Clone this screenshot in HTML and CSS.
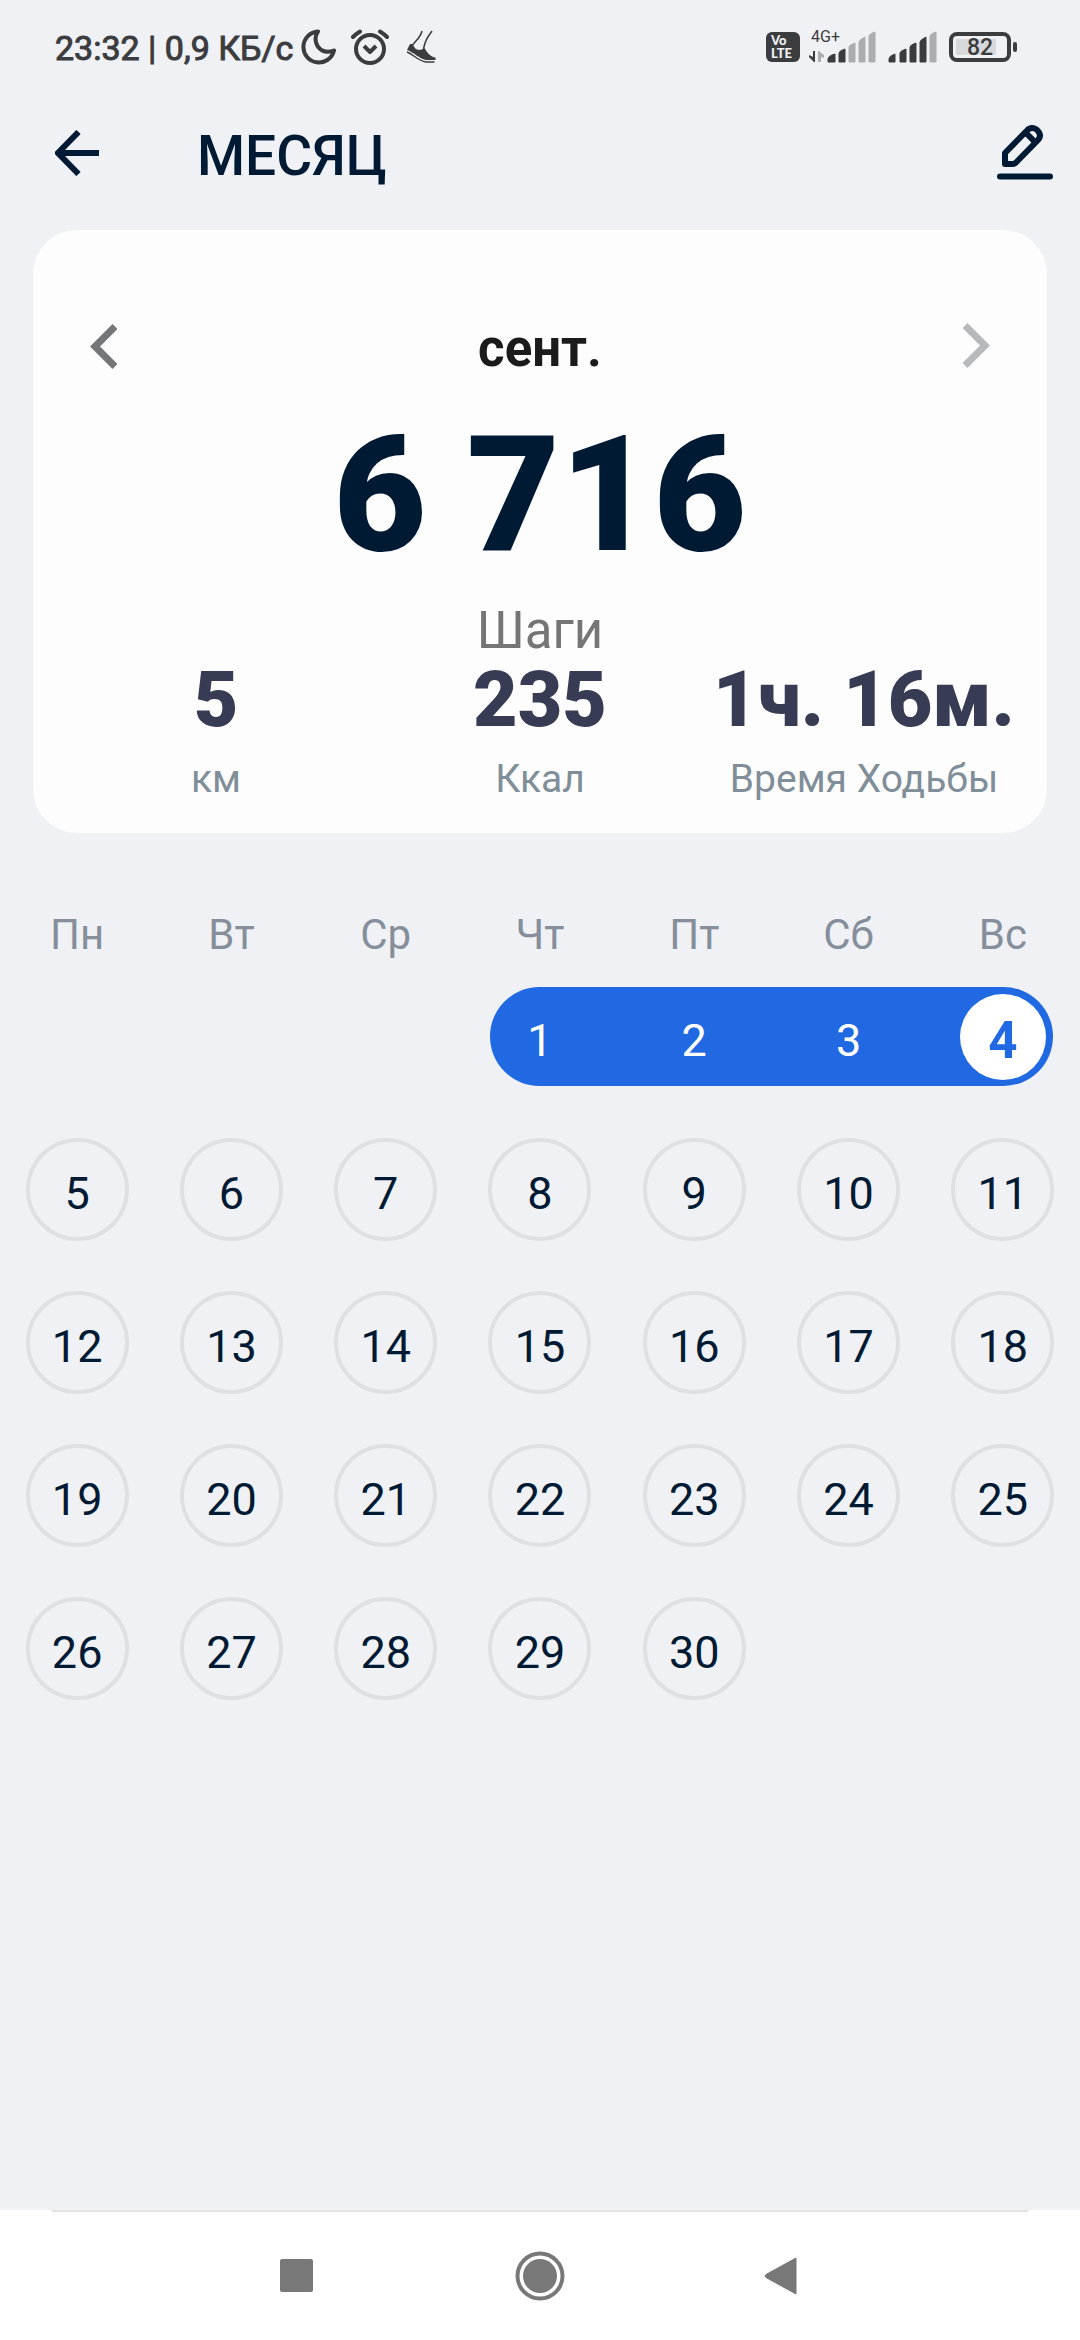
FILE: index.html
```html
<!DOCTYPE html>
<html lang="ru">
<head>
<meta charset="utf-8">
<meta name="viewport" content="width=device-width">
<title>Месяц</title>
<link rel="stylesheet" href="styles.css">
</head>
<body>
<div class="status">
  <span class="status-text">23:32 | 0,9 КБ/с</span>
  <svg class="moon" width="36" height="36" viewBox="0 0 36 36"><path d="M17 2.500A15.500 15.500 0 1 0 33 21.500C26 24.500 19.500 22 16.500 17C13.700 12 14 7 17 2.500Z" fill="none" stroke="#3b3c3e" stroke-width="4" stroke-linejoin="round"/></svg>
  <svg class="alarm" width="40" height="36" viewBox="0 0 40 36"><g fill="none" stroke="#3b3c3e" stroke-width="4"><circle cx="20" cy="20" r="14"/><path d="M14 17l6 6 6-6" stroke-linejoin="round"/><path d="M3 8q3-3 7-5.500M37 8q-3-3-7-5.500" stroke-linecap="round"/></g></svg>
  <svg class="shoe" width="30" height="34" viewBox="0 0 30 34"><g fill="none" stroke="#3b3c3e"><path d="M16 1C14.500 8 9 11 6 16M26 1C21 8 19 11 17.500 19" stroke-width="1.500"/><path d="M1 22C7 24 12 31 20 32H28.500" stroke-width="1.500"/></g><path d="M4 14L1 20C8 22.500 13 28.500 20 30H29.500V27.500C25 27 21 23 18.500 18C16 20 13 20.500 11 19.500C8 18 8 15.500 6 14Z" fill="#3b3c3e"/></svg>
  <span class="volte"><span>Vo</span><span>LTE</span></span>
  <span class="cell">
    <span class="net">4G+</span>
    <svg width="68" height="32" viewBox="0 0 68 32"><path d="M4 20H6V31H5L0 26V24L4 26Z" fill="#3b3c3e"/><path d="M9 31V20H10L15 24V27L12 26V31Z" fill="#acadb0"/><path d="M19 31v-3q0-3 7-5v8zM30 31v-9q0-2 6-4v13z" fill="#3b3c3e" stroke="#3b3c3e" stroke-linejoin="round"/><path d="M40 31V16q0-2 6-4v19zM50 31V11q0-2 6-5v25zM60 31V5q0-2 6-4v30z" fill="#acadb0" stroke="#acadb0" stroke-linejoin="round"/></svg>
  </span>
  <svg class="signal" width="49" height="32" viewBox="0 0 49 32"><path d="M1 31v-3q0-3 6-5v8zM12 31v-9q0-2 6-4v13zM22 31V16q0-2 6-4v19zM32 31V11q0-2 6-5v25z" fill="#3b3c3e" stroke="#3b3c3e" stroke-linejoin="round"/><path d="M42 31V5q0-2 6-4v30z" fill="#acadb0" stroke="#acadb0" stroke-linejoin="round"/></svg>
  <span class="battery"><span class="battery-level">82</span></span>
</div>

<header class="appbar">
  <button class="icon-btn" type="button" aria-label="Назад"><svg width="44" height="46" viewBox="0 0 44 46"><path d="M44 23H4M23.500 2L3 23L23.500 44" fill="none" stroke="#001a33" stroke-width="6"/></svg></button>
  <h1>МЕСЯЦ</h1>
  <button class="icon-btn" type="button" aria-label="Изменить"><svg width="56" height="56" viewBox="0 0 56 56"><g fill="none" stroke="#001a33" stroke-width="6" stroke-linejoin="round"><path d="M8 39V28L31 4.500Q35 1.500 39.500 4.500L41 6Q45 10.500 41 15L18.500 38Q17 39 15 39Z"/><path d="M29 8L38 17"/><path d="M3 51.500H53" stroke-linecap="round"/></g></svg></button>
</header>

<main>
  <section class="card">
    <div class="month">
      <button class="icon-btn" type="button" aria-label="Предыдущий месяц"><svg width="27" height="46" viewBox="0 0 27 46"><path d="M25 3.500L5 23.500L25 43.500" fill="none" stroke="#757678" stroke-width="7"/></svg></button>
      <h2>сент.</h2>
      <button class="icon-btn" type="button" aria-label="Следующий месяц" disabled><svg width="27" height="46" viewBox="0 0 27 46"><path d="M2 2.500L22 22.500L2 42.500" fill="none" stroke="#b8b9ba" stroke-width="7"/></svg></button>
    </div>
    <p class="total">6 716</p>
    <p class="unit">Шаги</p>
    <dl class="stats">
      <div><dd>5</dd><dt>км</dt></div>
      <div><dd>235</dd><dt>Ккал</dt></div>
      <div><dd>1ч. 16м.</dd><dt>Время Ходьбы</dt></div>
    </dl>
  </section>

  <table class="calendar">
    <thead><tr><th>Пн</th><th>Вт</th><th>Ср</th><th>Чт</th><th>Пт</th><th>Сб</th><th>Вс</th></tr></thead>
    <tbody>
      <tr><td></td><td></td><td></td>
        <td><div class="band start"><button class="day" type="button">1</button></div></td>
        <td><div class="band"><button class="day" type="button">2</button></div></td>
        <td><div class="band"><button class="day" type="button">3</button></div></td>
        <td><div class="band end"><button class="day today" type="button">4</button></div></td></tr>
      <tr><td><button class="day ring" type="button">5</button></td><td><button class="day ring" type="button">6</button></td><td><button class="day ring" type="button">7</button></td><td><button class="day ring" type="button">8</button></td><td><button class="day ring" type="button">9</button></td><td><button class="day ring" type="button">10</button></td><td><button class="day ring" type="button">11</button></td></tr>
      <tr><td><button class="day ring" type="button">12</button></td><td><button class="day ring" type="button">13</button></td><td><button class="day ring" type="button">14</button></td><td><button class="day ring" type="button">15</button></td><td><button class="day ring" type="button">16</button></td><td><button class="day ring" type="button">17</button></td><td><button class="day ring" type="button">18</button></td></tr>
      <tr><td><button class="day ring" type="button">19</button></td><td><button class="day ring" type="button">20</button></td><td><button class="day ring" type="button">21</button></td><td><button class="day ring" type="button">22</button></td><td><button class="day ring" type="button">23</button></td><td><button class="day ring" type="button">24</button></td><td><button class="day ring" type="button">25</button></td></tr>
      <tr><td><button class="day ring" type="button">26</button></td><td><button class="day ring" type="button">27</button></td><td><button class="day ring" type="button">28</button></td><td><button class="day ring" type="button">29</button></td><td><button class="day ring" type="button">30</button></td><td></td><td></td></tr>
    </tbody>
  </table>
</main>

<nav class="navbar">
  <button class="icon-btn" type="button" aria-label="Недавние"><svg width="50" height="50" viewBox="0 0 50 50"><rect x="5" y="8" width="33" height="33" rx="2" fill="#787878"/></svg></button>
  <button class="icon-btn" type="button" aria-label="Домой"><svg width="50" height="50" viewBox="0 0 50 50"><circle cx="25" cy="25" r="22.500" fill="none" stroke="#787878" stroke-width="4"/><circle cx="25" cy="25" r="17" fill="#787878"/></svg></button>
  <button class="icon-btn" type="button" aria-label="Назад"><svg width="50" height="50" viewBox="0 0 50 50"><path d="M41 7V43L11 26.500Q9 25 11 23.500Z" fill="#787878" stroke="#787878" stroke-linejoin="round"/></svg></button>
</nav>
</body>
</html>
```
FILE: styles.css
```css
* {
  box-sizing: border-box;
}

body {
  display: flex;
  flex-direction: column;
  min-height: 100vh;
  margin: 0;
  background: #eff1f5;
  color: #001a33;
  font-family: Roboto, "Noto Sans", sans-serif;
}

h1, h2, p, dl, dd {
  margin: 0;
}

svg {
  display: block;
}

button {
  padding: 0;
  border: 0;
  background: none;
  color: inherit;
  font: inherit;
}

.icon-btn {
  display: flex;
}

/* Status bar */
.status {
  display: flex;
  align-items: center;
  height: 94px;
  padding: 0 62px 0 55px;
  color: #3b3c3e;
}

.status-text {
  padding-top: 2px;
  font-size: 34px;
  font-weight: 400;
  line-height: 40px;
  -webkit-text-stroke: 1px #3b3c3e;
}

.moon {
  margin-left: 8px;
}

.alarm {
  margin-left: 13px;
}

.shoe {
  margin-left: 16px;
}

.volte {
  display: flex;
  flex-direction: column;
  width: 34px;
  height: 30px;
  margin-left: auto;
  padding: 2px 5px;
  border-radius: 6px;
  background: #3b3c3e;
  color: #eff1f5;
  font-family: Lato, sans-serif;
  font-size: 13px;
  font-weight: 900;
  line-height: 13px;
}

.cell {
  position: relative;
  margin-left: 9px;
}

.net {
  position: absolute;
  top: -2px;
  left: 2px;
  font-size: 16px;
  line-height: 16px;
}

.signal {
  margin-left: 11px;
}

.battery {
  position: relative;
  width: 62px;
  height: 30px;
  margin-right: 7px;
  margin-left: 12px;
  padding: 3px;
  border: 4px solid #3b3c3e;
  border-radius: 8px;
}

.battery::after {
  content: "";
  position: absolute;
  top: 6px;
  right: -10px;
  width: 4px;
  height: 10px;
  border-radius: 2px;
  background: #3b3c3e;
}

.battery-level {
  display: block;
  width: 40px;
  height: 16px;
  background: #d8d9dc;
  padding-left: 11px;
  font-size: 23px;
  font-weight: 500;
  line-height: 17px;
}

/* App bar */
.appbar {
  display: flex;
  align-items: center;
  height: 118px;
  padding: 0 27px 0 55px;
}

.appbar h1 {
  flex: 1;
  padding: 6px 0 0 98px;
  font-size: 55px;
  font-weight: 500;
  line-height: 64px;
}

/* Summary card */
.card {
  margin: 18px 33px 0;
  padding: 70px 21px 30px;
  border-radius: 44px;
  background: #fdfdfd;
  text-align: center;
}

.month {
  display: flex;
  align-items: center;
  justify-content: space-between;
  height: 92px;
  padding: 0 36px;
}

.month h2 {
  padding-top: 6px;
  color: #1b1b1b;
  font-size: 51px;
  font-weight: 700;
  line-height: 60px;
}

.total {
  margin-top: 9px;
  font-size: 161px;
  font-weight: 900;
  line-height: 188px;
}

.unit {
  margin-top: 12px;
  color: #757575;
  font-size: 51px;
  line-height: 60px;
}

.stats {
  display: grid;
  grid-template-columns: repeat(3, 1fr);
}

.stats div {
  display: flex;
  flex-direction: column;
}

.stats dd {
  color: #373b54;
  font-size: 77px;
  font-weight: 900;
  line-height: 78px;
}

.stats dt {
  margin-top: 16px;
  color: #7f8e98;
  font-size: 39px;
  line-height: 48px;
}

/* Calendar */
.calendar {
  width: 100%;
  margin-top: 76px;
  border-collapse: collapse;
  table-layout: fixed;
}

.calendar th {
  height: 51px;
  padding: 0;
  color: #858e9a;
  font-size: 42px;
  font-weight: 400;
  line-height: 50px;
}

.calendar td {
  height: 153px;
  padding: 0;
}

.day {
  display: block;
  width: 100px;
  height: 99px;
  padding-top: 8px;
  border-radius: 50%;
  font-size: 45px;
}

.ring {
  width: 103px;
  height: 103px;
  margin: 0 auto;
  border: 4px solid #dfe0e4;
}

.band {
  display: flex;
  align-items: center;
  justify-content: center;
  height: 99px;
  background: #2069e3;
  color: #fff;
}

.start {
  justify-content: flex-start;
  margin-left: calc(50% - 50px);
  border-radius: 50px 0 0 50px;
}

.end {
  justify-content: flex-end;
  margin-right: calc(50% - 50px);
  padding-right: 7px;
  border-radius: 0 50px 50px 0;
}

.today {
  width: 86px;
  height: 86px;
  background: #fff;
  color: #2069e3;
  font-size: 51px;
  font-weight: 700;
}

/* System navigation */
.navbar {
  display: flex;
  justify-content: center;
  gap: 190px;
  height: 130px;
  margin-top: auto;
  padding-top: 41px;
  background: linear-gradient(#e4e4e6, #e4e4e6) center top / calc(100% - 104px) 2px no-repeat #fff;
}
```
